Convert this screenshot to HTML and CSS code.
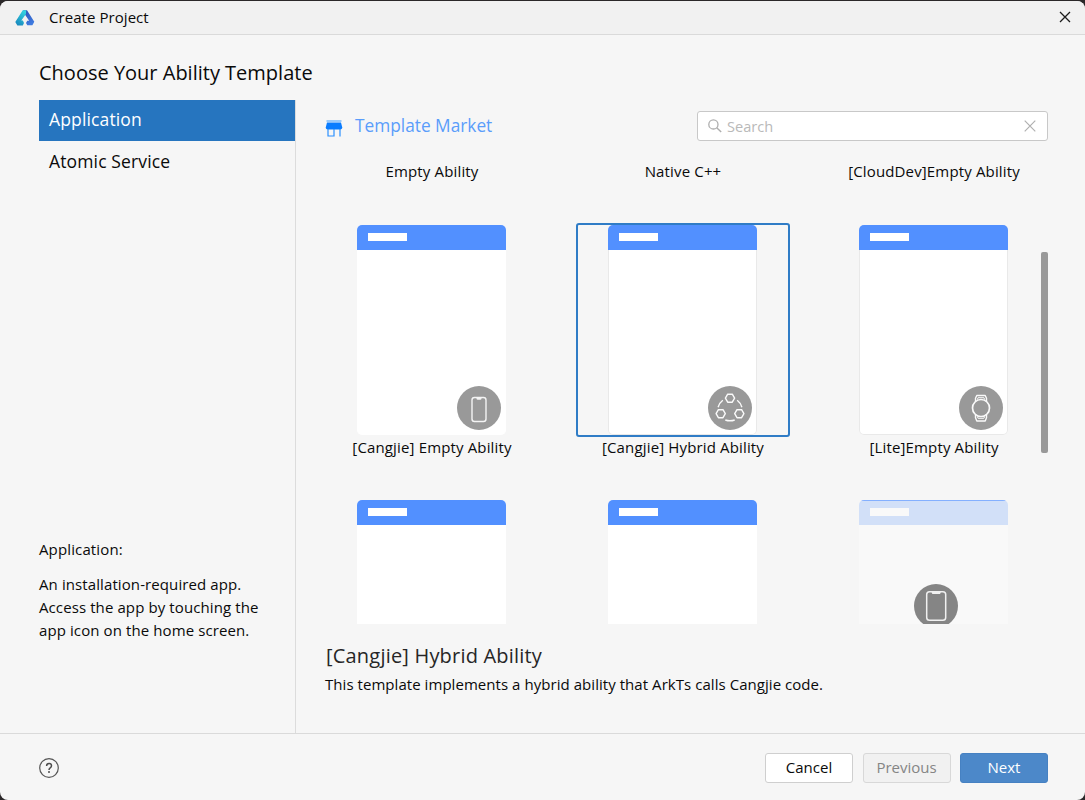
FILE: index.html
```html
<!DOCTYPE html>
<html lang="en">
<head>
<meta charset="utf-8">
<title>Create Project</title>
<link rel="stylesheet" href="styles.css">
</head>
<body>
<div class="window">
  <header class="titlebar">
    <svg class="logo" width="20" height="18" viewBox="0 0 20 18">
      <defs>
        <linearGradient id="lg1" x1="0.7" y1="0" x2="0.2" y2="1"><stop offset="0" stop-color="#35d3e0"/><stop offset="1" stop-color="#1787bd"/></linearGradient>
        <linearGradient id="lg2" x1="0" y1="0" x2="0.6" y2="1"><stop offset="0" stop-color="#2a4fb4"/><stop offset="1" stop-color="#3f7be0"/></linearGradient>
      </defs>
      <path d="M8 1.200h4l7.300 11.600-1.900 3.500h-5.100l-1.300-2.400 1.300-2.200h1.900L9.200 4.600z" fill="url(#lg2)"/>
      <path d="M7.700 1.200h3.500L11 5.100 6.300 11.500h1.600L9 14l-1.200 2.400H2.400L.3 13z" fill="url(#lg1)"/>
    </svg>
    <span class="titlebar-text">Create Project</span>
    <svg class="close" width="12" height="12" viewBox="0 0 12 12"><path d="M1 1l10 10M11 1L1 11" fill="none" stroke="#1c1c1c" stroke-width="1.300"/></svg>
  </header>

  <div class="content">
    <aside class="sidebar">
      <h1 class="heading">Choose Your Ability Template</h1>
      <div class="side-body">
        <ul class="categories">
          <li class="category active">Application</li>
          <li class="category">Atomic Service</li>
        </ul>
        <div class="about">
          <p class="about-title">Application:</p>
          <p class="about-text">An installation-required app.<br>Access the app by touching the<br>app icon on the home screen.</p>
        </div>
      </div>
    </aside>

    <main class="main">
      <div class="toolbar">
        <svg class="market-icon" width="18" height="17" viewBox="0 0 18 17">
          <path d="M1.500 .4h15v1.200h-15z" fill="#3d9bff"/>
          <path d="M2 2.600h14l1.300 5.200q-.3 1.600-2 1.600H2.700q-1.700 0-2-1.600z" fill="#0a7cff"/>
          <path d="M3 9v7h6V9M15 9v7.500" fill="none" stroke="#2b90ff" stroke-width="1.200"/>
        </svg>
        <span class="market">Template Market</span>
        <div class="search">
          <svg width="14" height="14" viewBox="0 0 14 14"><circle cx="5.400" cy="5.400" r="4.600" fill="none" stroke="#aeaeae" stroke-width="1.300"/><path d="M8.700 8.700L13.200 13" stroke="#aeaeae" stroke-width="1.400"/></svg>
          <span class="placeholder">Search</span>
          <svg width="12" height="12" viewBox="0 0 12 12"><path d="M.7.7l10.600 10.600M11.300.7L.7 11.300" stroke="#b0b0b0" stroke-width="1.200"/></svg>
        </div>
      </div>

      <div class="gallery">
        <div class="grid">
          <div class="label first">Empty Ability</div>
          <div class="label first">Native C++</div>
          <div class="label first">[CloudDev]Empty Ability</div>

          <div class="cell">
            <div class="thumb"><div class="card"><div class="bar"><i class="chip"></i></div>
              <svg class="badge" viewBox="0 0 44 44"><circle cx="22" cy="22" r="22" fill="#999"/><rect x="15" y="11.500" width="14" height="24" rx="2.500" fill="none" stroke="#f4f4f4" stroke-width="1.400"/><path d="M19.500 12h5v.7q-.2 1-1.200 1h-2.600q-1 0-1.200-1z" fill="#f4f4f4"/></svg>
            </div></div>
            <div class="label">[Cangjie] Empty Ability</div>
          </div>
          <div class="cell">
            <div class="thumb selected"><div class="card outlined"><div class="bar"><i class="chip"></i></div>
              <svg class="badge" viewBox="0 0 44 44"><circle cx="22" cy="22" r="22" fill="#999"/>
                <g fill="none" stroke="#fafafa" stroke-width="1.400" stroke-linejoin="round">
                  <path d="M17.400 12.200l2.300-4h4.600l2.300 4-2.300 4h-4.600zM8.100 27.700l2.300-4H15l2.300 4-2.300 4h-4.600zM26.700 27.700l2.300-4h4.600l2.300 4-2.300 4H29z"/>
                  <path d="M14.800 14.200q-3.500 2.600-4.700 7M29.200 14.200q3.500 2.600 4.700 7M17.300 34q4.700 1.600 9.400 0"/>
                </g></svg>
            </div></div>
            <div class="label">[Cangjie] Hybrid Ability</div>
          </div>
          <div class="cell">
            <div class="thumb"><div class="card outlined"><div class="bar"><i class="chip"></i></div>
              <svg class="badge" viewBox="0 0 44 44"><circle cx="22" cy="22" r="22" fill="#999"/>
                <g fill="none" stroke="#fafafa" stroke-width="1.700" stroke-linejoin="round">
                  <circle cx="22" cy="22" r="8.500"/>
                  <path d="M16.500 15.300v-3l1.300-2.800h8.400l1.300 2.800v3M16.500 28.700v3l1.300 3.300h8.400l1.300-3.300v-3" stroke-width="1.400"/>
                  <path d="M18.300 13.600l.8-1.900h5.800l.8 1.900M18.300 30.400l.8 1.900h5.800l.8-1.900" stroke-width="1"/>
                </g></svg>
            </div></div>
            <div class="label">[Lite]Empty Ability</div>
          </div>

          <div class="cell"><div class="thumb"><div class="card"><div class="bar"><i class="chip"></i></div></div></div></div>
          <div class="cell"><div class="thumb"><div class="card"><div class="bar"><i class="chip"></i></div></div></div></div>
          <div class="cell"><div class="thumb"><div class="card faded"><div class="bar"><i class="chip"></i></div>
            <svg class="badge center" viewBox="0 0 44 44"><circle cx="22" cy="22" r="22" fill="#858585"/><rect x="12.700" y="7.800" width="19" height="28.500" rx="2.800" fill="none" stroke="#f0f0f0" stroke-width="1.500"/><path d="M17.500 8h9.400l-.8 2h-7.800z" fill="#f0f0f0"/></svg>
          </div></div></div>
        </div>
        <div class="scrollbar"></div>
      </div>

      <section class="details">
        <h2 class="details-title">[Cangjie] Hybrid Ability</h2>
        <p class="details-text">This template implements a hybrid ability that ArkTs calls Cangjie code.</p>
      </section>
    </main>
  </div>

  <footer class="footer">
    <svg class="help" width="20" height="20" viewBox="0 0 20 20"><circle cx="10" cy="10" r="9.300" fill="none" stroke="#555" stroke-width="1.200"/><path d="M7.600 8.100q0-2.500 2.500-2.500 2.400 0 2.400 2.200 0 1.200-1.300 2-1.200.8-1.200 2.100" fill="none" stroke="#4c4c4c" stroke-width="1.500"/><circle cx="10" cy="14.100" r="1" fill="#4c4c4c"/></svg>
    <button class="btn">Cancel</button>
    <button class="btn disabled">Previous</button>
    <button class="btn primary">Next</button>
  </footer>
</div>
</body>
</html>
```
FILE: styles.css
```css
* { box-sizing: border-box; margin: 0; padding: 0; }
body {
  width: 1085px;
  height: 800px;
  padding-top: 1px;
  overflow: hidden;
  background: #2b2829;
  color: #0a0a0a;
  font: 15px/22px "Open Sans", "Noto Sans", sans-serif;
}
.window {
  display: flex;
  flex-direction: column;
  height: 799px;
  overflow: hidden;
  background: #f6f6f6;
  border-radius: 8px;
}
.titlebar {
  display: flex;
  align-items: center;
  height: 34px;
  padding: 0 14px 1px 15px;
  background: #f1f1f1;
  border-bottom: 1px solid #dadada;
}
.titlebar-text { margin-left: 14px; letter-spacing: .06px; }
.logo { margin-top: 1px; }
.close { margin-left: auto; }

.content { display: flex; height: 698px; }
.sidebar { display: flex; flex-direction: column; width: 296px; padding: 26px 0 0 39px; }
.heading {
  width: 290px;
  font-size: 20px;
  line-height: 24px;
  font-weight: 400;
  white-space: nowrap;
}
.side-body {
  display: flex;
  flex-direction: column;
  justify-content: space-between;
  flex: 1;
  margin-top: 15px;
  padding-bottom: 91px;
  border-right: 1px solid #dcdcdc;
}
.categories { list-style: none; }
.category {
  height: 41px;
  padding-left: 10px;
  font-size: 17.5px;
  line-height: 38px;
  letter-spacing: .14px;
}
.category + .category { line-height: 41px; }
.category.active { background: #2675bf; color: #fff; }
.about { letter-spacing: .13px; }
.about-text { margin-top: 13px; line-height: 23px; letter-spacing: .1px; }

.main { display: flex; flex-direction: column; width: 789px; padding: 76px 0 0 29px; }
.toolbar { display: flex; align-items: center; height: 30px; padding-right: 37px; }
.market-icon { margin: 4px 12px 0 0; }
.market { color: #5a9dfb; font-size: 17.3px; }
.search {
  display: flex;
  align-items: center;
  width: 351px;
  height: 30px;
  margin-left: auto;
  padding: 0 11px 0 10px;
  background: #fff;
  border: 1px solid #c8c8c8;
  border-radius: 3px;
}
.placeholder { flex: 1; margin-left: 5px; color: #b9b9b9; font-size: 14.6px; }

.gallery { display: flex; height: 483px; overflow: hidden; }
.grid {
  display: grid;
  grid-template-columns: repeat(3, 214px);
  grid-template-rows: 82px 275px 214px;
  column-gap: 37px;
}
.label { margin-top: -1px; text-align: center; white-space: nowrap; letter-spacing: .15px; }
.label.first { padding-top: 20px; }
.thumb {
  display: flex;
  padding-left: 30px;
  height: 214px;
  border: 2px solid transparent;
  border-radius: 3px;
}
.thumb.selected { border-color: #2f7cc6; }
.card {
  position: relative;
  width: 149px;
  height: 210px;
  overflow: hidden;
  background: #fff;
  border-radius: 5px;
}
.card.outlined { box-shadow: inset 0 0 0 1px #e9e9e9; }
.bar { height: 24.5px; padding: 8px 0 0 11px; background: #5290ff; }
.chip { display: block; width: 39px; height: 8px; background: #fff; }
.badge { position: absolute; right: 5px; bottom: 5px; width: 44px; height: 44px; }
.badge.center { right: 50px; bottom: 82.500px; }
.card.faded { background: #f9f9f9; }
.faded .bar { background: linear-gradient(#84b0ff 1px, #d2e0f8 1px); }
.faded .chip { background: #f9f9f9; }
.scrollbar { width: 7px; height: 201px; margin-top: 111px; background: #999; border-radius: 2px; }

.details { padding-top: 20px; }
.details-title {
  margin-left: 1px;
  color: #262626;
  font-size: 20px;
  line-height: 24px;
  font-weight: 400;
  letter-spacing: .2px;
}
.details-text { margin-top: 5px; letter-spacing: .05px; }

.footer {
  display: flex;
  align-items: center;
  gap: 9.5px;
  flex: 1;
  padding: 2px 37px 0 39px;
  border-top: 1px solid #dadada;
}
.help { margin-right: auto; }
.btn {
  width: 88px;
  height: 30px;
  padding-bottom: 2px;
  background: #fff;
  border: 1px solid #cfcfcf;
  border-radius: 3px;
  color: #0a0a0a;
  font: inherit;
  line-height: 26px;
}
.btn.disabled { background: #f1f1f1; border-color: #d8d8d8; color: #858585; }
.btn.primary { background: #4c88c9; border-color: #4681c2; color: #fff; }
```
